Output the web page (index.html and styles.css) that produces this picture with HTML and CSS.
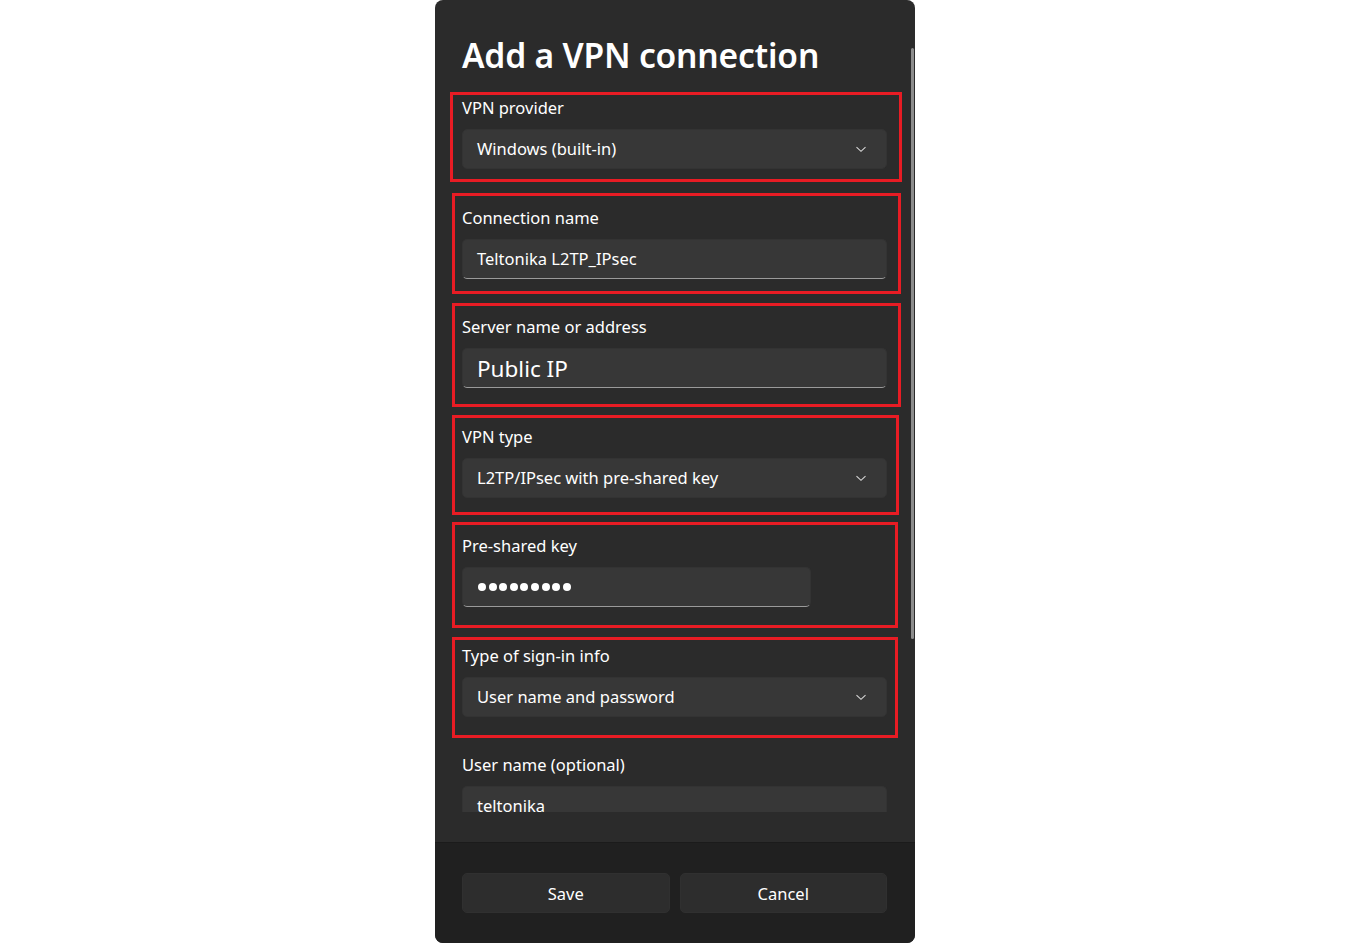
FILE: index.html
```html
<!DOCTYPE html>
<html lang="en">
<head>
<meta charset="utf-8">
<title>Add a VPN connection</title>
<link rel="stylesheet" href="styles.css">
</head>
<body>
<div class="dialog">
  <div class="body">
    <div class="scroll">
      <h1 class="title">Add a VPN connection</h1>

      <div class="group marked mk1">
        <div class="label">VPN provider</div>
        <div class="field select"><span class="value">Windows (built-in)</span>
          <svg class="chev" width="12" height="12" viewBox="0 0 12 12"><path d="M1.5 4.2 L6 8.3 L10.5 4.2" fill="none" stroke="#d8d8d8" stroke-width="1.1"/></svg>
        </div>
      </div>

      <div class="group marked mk2">
        <div class="label">Connection name</div>
        <div class="field text"><span class="value">Teltonika L2TP_IPsec</span></div>
      </div>

      <div class="group marked mk3">
        <div class="label">Server name or address</div>
        <div class="field text"><span class="value big">Public IP</span></div>
      </div>

      <div class="group marked mk4">
        <div class="label">VPN type</div>
        <div class="field select"><span class="value">L2TP/IPsec with pre-shared key</span>
          <svg class="chev" width="12" height="12" viewBox="0 0 12 12"><path d="M1.5 4.2 L6 8.3 L10.5 4.2" fill="none" stroke="#d8d8d8" stroke-width="1.1"/></svg>
        </div>
      </div>

      <div class="group marked mk5">
        <div class="label">Pre-shared key</div>
        <div class="field text narrow">
          <span class="dots"><i></i><i></i><i></i><i></i><i></i><i></i><i></i><i></i><i></i></span>
        </div>
      </div>

      <div class="group marked mk6">
        <div class="label">Type of sign-in info</div>
        <div class="field select"><span class="value">User name and password</span>
          <svg class="chev" width="12" height="12" viewBox="0 0 12 12"><path d="M1.5 4.2 L6 8.3 L10.5 4.2" fill="none" stroke="#d8d8d8" stroke-width="1.1"/></svg>
        </div>
      </div>

      <div class="group">
        <div class="label">User name (optional)</div>
        <div class="field text"><span class="value">teltonika</span></div>
      </div>
    </div>
    <div class="scrollbar"></div>
  </div>
  <div class="footer">
    <button class="btn">Save</button>
    <button class="btn">Cancel</button>
  </div>
</div>
</body>
</html>
```

FILE: styles.css
```css
* { box-sizing: border-box; }

html, body {
  margin: 0;
  padding: 0;
  background: #ffffff;
}

body {
  font-family: "Noto Sans", "Open Sans", sans-serif;
  color: #ffffff;
}

.dialog {
  width: 480px;
  height: 943px;
  margin: 0 auto;
  background: #2b2b2b;
  border-radius: 8px;
  overflow: hidden;
  display: flex;
  flex-direction: column;
}

.body {
  position: relative;
  height: 842px;
  padding-bottom: 30px;
  display: flex;
  flex-direction: column;
}

.scroll {
  flex: 1;
  overflow: hidden;
  padding: 33px 28px 0 27px;
}

.title {
  margin: 0 0 20px 0;
  font-size: 33.6px;
  font-weight: 600;
  line-height: 44px;
  letter-spacing: -0.2px;
}

.group {
  position: relative;
  margin-bottom: 37.5px;
}

.group.marked::after {
  content: "";
  position: absolute;
  border: 3px solid #e81c24;
  pointer-events: none;
}

.mk1::after { top: -5px;  bottom: -13px; left: -12px; right: -15px; }
.mk2::after { top: -14px; bottom: -15px; left: -10px; right: -14px; }
.mk3::after { top: -13px; bottom: -19px; left: -10px; right: -14px; }
.mk4::after { top: -11px; bottom: -17px; left: -10px; right: -12px; }
.mk5::after { top: -13px; bottom: -21px; left: -10px; right: -11px; }
.mk6::after { top: -8px;  bottom: -21px; left: -10px; right: -11px; }

.label {
  font-size: 16.5px;
  line-height: 22px;
  margin-bottom: 10px;
}

.field {
  height: 40px;
  background: #373737;
  border-radius: 5px;
  display: flex;
  align-items: center;
  padding: 0 19px 0 14px;
  border: 1px solid #333333;
}

.field.text {
  border-bottom: 1px solid #9a9a9a;
}

.field.narrow {
  width: 349px;
}

.value {
  flex: 1;
  font-size: 16.5px;
  line-height: 22px;
}

.value.big {
  font-size: 22.5px;
  padding-top: 2px;
}

.chev {
  flex: none;
  display: block;
}

.dots {
  display: flex;
  gap: 2.6px;
  padding-left: 1px;
}

.dots i {
  display: block;
  width: 8px;
  height: 8px;
  border-radius: 50%;
  background: #ffffff;
}

.scrollbar {
  position: absolute;
  top: 48px;
  right: 1px;
  width: 3px;
  height: 591px;
  border-radius: 2px;
  background: #8c8c8c;
}

.footer {
  flex: 1;
  background: #202020;
  border-top: 1px solid #1b1b1b;
  display: flex;
  gap: 10px;
  padding: 30px 28px 0 27px;
  align-items: flex-start;
}

.btn {
  flex: 1;
  height: 40px;
  background: #2d2d2d;
  border: 1px solid #303030;
  border-radius: 5px;
  color: #ffffff;
  font-family: "Noto Sans", "Open Sans", sans-serif;
  font-size: 16.5px;
}
```
